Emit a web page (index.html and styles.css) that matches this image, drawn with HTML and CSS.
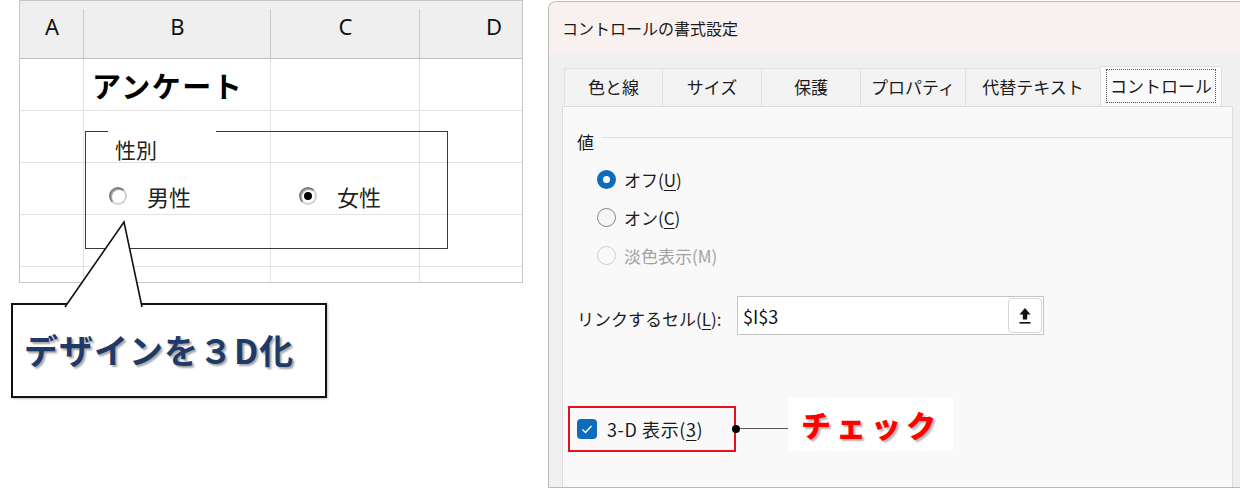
FILE: index.html
```html
<!DOCTYPE html>
<html lang="ja">
<head>
  <meta charset="UTF-8">
  <title>コントロールの書式設定 - 3D表示</title>
  <link rel="stylesheet" href="styles.css">
</head>
<body>
  <div class="page">

    <!-- left: sheet with option buttons -->
    <div class="left">
      <div class="sheet">
        <div class="hd">A</div>
        <div class="hd">B</div>
        <div class="hd">C</div>
        <div class="hd hd-d">D</div>

        <div class="cell"></div><div class="cell title">アンケート</div><div class="cell"></div><div class="cell"></div>
        <div class="cell"></div><div class="cell"></div><div class="cell"></div><div class="cell"></div>
        <div class="cell"></div><div class="cell"></div><div class="cell"></div><div class="cell"></div>
        <div class="cell"></div><div class="cell"></div><div class="cell"></div><div class="cell"></div>
        <div class="cell"></div><div class="cell"></div><div class="cell"></div><div class="cell"></div>
      </div>

      <div class="groupbox">
        <div class="gb-label">性別</div>
        <div class="gb-options">
          <span class="opt"><span class="radio3d"></span><span>男性</span></span>
          <span class="opt"><span class="radio3d on"></span><span>女性</span></span>
        </div>
      </div>

      <div class="callout">
        <svg class="pointer" width="140" height="88" viewBox="0 0 140 88">
          <path d="M54 87 L113 2 L131 87" fill="#fff" stroke="#111" stroke-width="1.6"/>
        </svg>
        <span class="callout-text">デザインを３D化</span>
      </div>
    </div>

    <!-- right: format control dialog -->
    <div class="dialog">
      <div class="dlg-title">コントロールの書式設定</div>

      <div class="tabs">
        <div class="tab t1">色と線</div>
        <div class="tab t2">サイズ</div>
        <div class="tab t3">保護</div>
        <div class="tab t4">プロパティ</div>
        <div class="tab t5">代替テキスト</div>
        <div class="tab active"><span class="focus">コントロール</span></div>
      </div>

      <div class="panel">
        <div class="grp-head">
          <span>値</span>
          <span class="grp-line"></span>
        </div>

        <div class="radios">
          <div class="r-row"><span class="rb checked"></span><span>オフ(<u>U</u>)</span></div>
          <div class="r-row"><span class="rb"></span><span>オン(<u>C</u>)</span></div>
          <div class="r-row disabled"><span class="rb"></span><span>淡色表示(M)</span></div>
        </div>

        <div class="link-row">
          <span class="link-label">リンクするセル(<u>L</u>):</span>
          <div class="ref-input">
            <span class="ref-text">$I$3</span>
            <span class="ref-btn">
              <svg width="14" height="18" viewBox="0 0 14 18">
                <path d="M7 1 L1.5 7.5 H4.8 V12.5 H9.2 V7.5 H12.5 Z" fill="#111"/>
                <rect x="1.5" y="15" width="11" height="1.6" fill="#111"/>
              </svg>
            </span>
          </div>
        </div>

        <div class="chk-wrap">
          <div class="chk-box">
            <span class="cb">
              <svg width="20" height="20" viewBox="0 0 20 20">
                <path d="M5.5 10.5 L8.5 13.5 L14.5 7" fill="none" stroke="#fff" stroke-width="1.4"/>
              </svg>
            </span>
            <span class="chk-text">3-D 表示(<u>3</u>)</span>
          </div>
          <div class="connector">
            <span class="dot"></span>
            <span class="wire"></span>
          </div>
          <div class="note">チェック</div>
        </div>
      </div>
    </div>

  </div>
</body>
</html>
```

FILE: styles.css
```css
body {
  margin: 0;
  background: #fff;
  font-family: "Noto Sans CJK JP", "Noto Sans", sans-serif;
  color: #1b1b1b;
}

.page {
  display: flex;
  height: 489px;
  overflow: hidden;
}

/* ---------- sheet ---------- */

.left {
  position: relative;
  width: 548px;
  flex: none;
}

.sheet {
  margin-left: 19px;
  display: grid;
  grid-template-columns: 64px 187px 149px 102px;
  grid-template-rows: 58px 52px 52px 52px 52px 15px;
  border: 1px solid #c6c6c6;
  width: 502px;
}

.hd {
  font-family: "Noto Sans", sans-serif;
  font-size: 22px;
  line-height: 28px;
  padding-top: 11px;
  text-align: center;
  color: #111;
  background: linear-gradient(#c9c9c9, #c9c9c9) right 8px / 1px calc(100% - 8px) no-repeat, #efefef;
  border-bottom: 1px solid #bdbdbd;
}

.hd-d {
  text-align: right;
  padding-right: 20px;
  background: #efefef;
}

.cell {
  border-right: 1px solid #e2e2e2;
  border-bottom: 1px solid #e2e2e2;
}

.cell:nth-child(4n) {
  border-right: none;
}

.cell:nth-last-child(-n+4) {
  border-bottom: none;
}

.title {
  font-size: 29px;
  font-weight: bold;
  letter-spacing: 1.5px;
  line-height: 52px;
  padding-left: 8px;
  color: #000;
}

.groupbox {
  position: absolute;
  left: 85px;
  top: 131px;
  width: 363px;
  height: 118px;
  box-sizing: border-box;
  border: 1.5px solid #3a3a3a;
}

.groupbox::before {
  content: "";
  position: absolute;
  left: 22px;
  top: -3px;
  width: 108px;
  height: 4px;
  background: #fff;
}

.gb-label {
  font-size: 21px;
  line-height: 24px;
  margin-top: 5px;
  padding-left: 29px;
  color: #222;
}

.gb-options {
  display: flex;
  margin-top: 23px;
  padding-left: 23px;
  font-size: 22px;
  line-height: 24px;
  color: #222;
}

.opt {
  display: flex;
  align-items: center;
  gap: 20px;
  flex: none;
}

.opt:first-child {
  width: 190px;
}

.radio3d {
  flex: none;
  width: 18px;
  height: 18px;
  border-radius: 50%;
  box-sizing: border-box;
  border: 2px solid;
  border-color: #7a7a7a #d2d2d2 #d2d2d2 #7a7a7a;
  box-shadow: inset 1px 1px 0 #a9a9a9;
  background: #fff;
  display: flex;
  align-items: center;
  justify-content: center;
}

.radio3d.on::after {
  content: "";
  width: 8px;
  height: 8px;
  border-radius: 50%;
  background: #000;
}

.callout {
  position: absolute;
  left: 11px;
  top: 303px;
  width: 316px;
  height: 95px;
  box-sizing: border-box;
  border: 2px solid #111;
  background: #fff;
  display: flex;
  align-items: center;
  padding-left: 11px;
  box-shadow: 1px 1px 2px rgba(0, 0, 0, 0.25);
}

.pointer {
  position: absolute;
  left: -2px;
  top: -85px;
}

.callout-text {
  font-size: 34px;
  font-weight: bold;
  letter-spacing: 1px;
  color: #1f3a68;
  text-shadow: 2px 2px 2px rgba(0, 0, 0, 0.35);
  margin-top: -2px;
}

/* ---------- dialog ---------- */

.dialog {
  flex: none;
  width: 692px;
  height: 487px;
  margin-top: 1px;
  box-sizing: border-box;
  border: 1px solid #b9b9b9;
  border-right: none;
  border-radius: 8px 0 0 0;
  background: #f0f0f0;
  display: flex;
  flex-direction: column;
  overflow: hidden;
}

.dlg-title {
  height: 51px;
  flex: none;
  background: #f9f1ef;
  padding-left: 13px;
  font-size: 16px;
  line-height: 52px;
  color: #1a1a1a;
}

.tabs {
  display: flex;
  margin: 15px 0 0 15px;
  height: 38px;
  flex: none;
  position: relative;
  z-index: 1;
}

.tab {
  box-sizing: border-box;
  height: 38px;
  border: 1px solid #e0e0e0;
  border-right: none;
  border-bottom: none;
  background: #f3f3f3;
  font-size: 17px;
  line-height: 36px;
  text-align: center;
  color: #1b1b1b;
}

.t1 { width: 98px; }
.t2 { width: 99px; }
.t3 { width: 99px; }
.t4 { width: 105px; }
.t5 { width: 135px; }

.tab.active {
  width: 122px;
  height: 40px;
  margin-top: -2px;
  background: #fafafa;
  border-right: 1px solid #e0e0e0;
  padding: 2px 5px 0;
}

.focus {
  display: block;
  height: 34px;
  line-height: 32px;
  box-sizing: border-box;
  border: 1px dotted #555;
}

.panel {
  flex: 1;
  margin: 0 7px 0 13px;
  background: #f9f9f9;
  border: 1px solid #dcdcdc;
  border-bottom: none;
  padding: 22px 0 0 14px;
  font-size: 17px;
}

.grp-head {
  display: flex;
  align-items: center;
  gap: 8px;
  height: 24px;
}

.grp-line {
  flex: 1;
  height: 1px;
  background: #dedede;
  margin-bottom: 8px;
}

.radios {
  margin-top: 7px;
  padding-left: 20px;
}

.r-row {
  display: flex;
  align-items: center;
  gap: 8px;
  height: 38px;
}

.rb {
  flex: none;
  width: 19px;
  height: 19px;
  box-sizing: border-box;
  border-radius: 50%;
  border: 1px solid #858585;
  background: #f6f6f6;
}

.rb.checked {
  border: 6px solid #0f6cbd;
  background: #fff;
}

.disabled {
  color: #a3a3a3;
}

.disabled .rb {
  border-color: #cfcfcf;
  background: #f9f9f9;
}

u {
  text-underline-offset: 3px;
}

.link-row {
  display: flex;
  align-items: center;
  margin-top: 22px;
}

.link-label {
  width: 160px;
  margin-top: 6px;
}

.ref-input {
  width: 307px;
  height: 39px;
  box-sizing: border-box;
  border: 1px solid #c5c5c5;
  background: #fff;
  display: flex;
  align-items: center;
  justify-content: space-between;
  padding: 0 1px 0 5px;
}

.ref-text {
  font-size: 18px;
  color: #111;
}

.ref-btn {
  width: 34px;
  height: 35px;
  box-sizing: border-box;
  border: 1px solid #d6d6d6;
  border-radius: 4px;
  background: #fff;
  display: flex;
  align-items: center;
  justify-content: center;
}

.chk-wrap {
  display: flex;
  align-items: center;
  margin: 63px 0 0 -9px;
}

.chk-box {
  width: 168px;
  height: 46px;
  box-sizing: border-box;
  border: 2.5px solid #e8101a;
  display: flex;
  align-items: center;
  gap: 10px;
  padding-left: 7px;
  color: #1b1b1b;
}

.chk-text {
  font-size: 18px;
  letter-spacing: 0.6px;
}

.cb {
  flex: none;
  width: 20px;
  height: 20px;
  border-radius: 4px;
  background: #0f6cbd;
  display: flex;
}

.connector {
  display: flex;
  align-items: center;
  width: 52px;
}

.dot {
  width: 8px;
  height: 8px;
  border-radius: 50%;
  background: #000;
  margin-left: -4px;
  flex: none;
}

.wire {
  flex: 1;
  height: 1px;
  background: #555;
}

.note {
  width: 165px;
  height: 53px;
  box-sizing: border-box;
  background: #fff;
  margin-bottom: 8px;
  padding-left: 13px;
  font-size: 30px;
  font-weight: 900;
  letter-spacing: 5px;
  line-height: 53px;
  color: #ff0000;
  text-shadow: 2px 2px 2px rgba(0, 0, 0, 0.3);
}
```
